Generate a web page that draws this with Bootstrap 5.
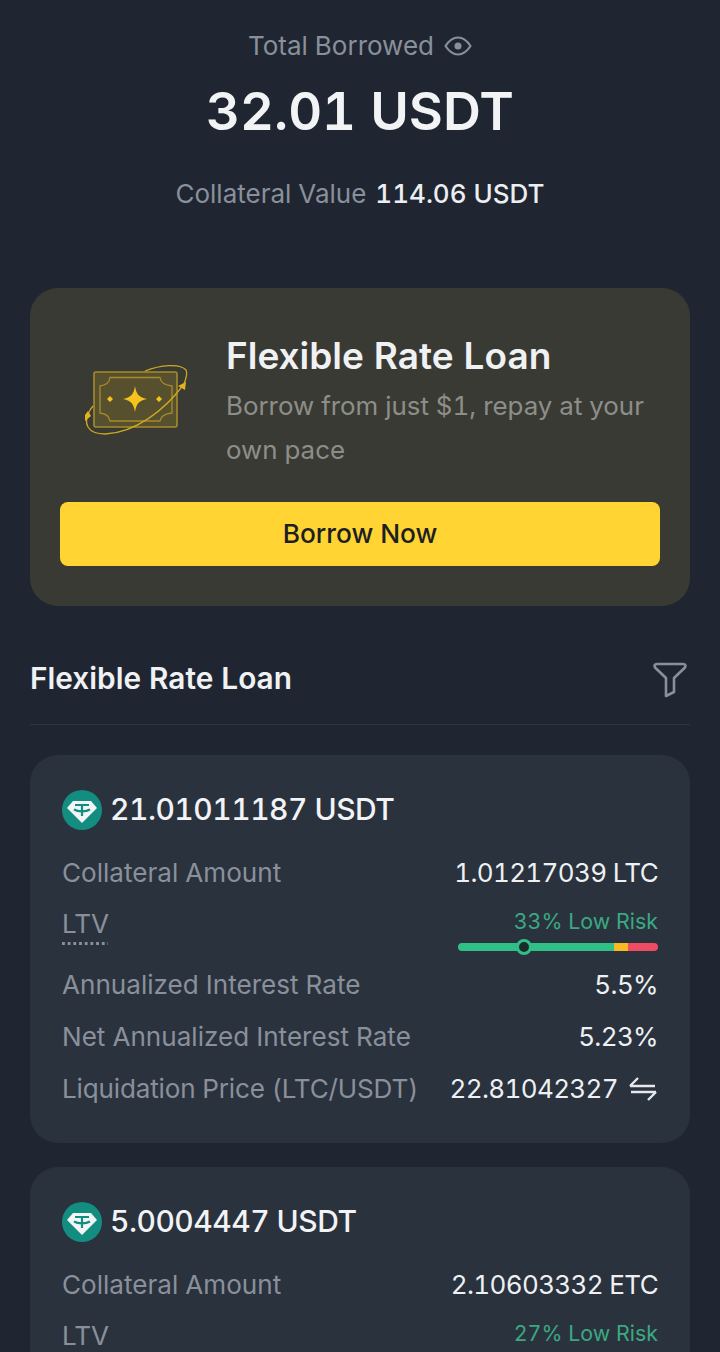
<!DOCTYPE html>
<html lang="en"><head><meta charset="utf-8"><title>Loan</title>
<link href="https://cdn.jsdelivr.net/npm/bootstrap@5.3.0/dist/css/bootstrap.min.css" rel="stylesheet">
<style>
html,body{height:1352px;overflow:hidden;background:#1f2632}
body{font-family:Inter,Lato,sans-serif;color:#f2f3f5;width:720px;font-feature-settings:"tnum"}
.muted-t{color:#8a909a}
.top-wrap{padding-top:28px;height:288px}
.tb-label{font-size:26px;line-height:36px;gap:10px}
.tb-val{font-size:52.500px;font-weight:600;line-height:64px;margin-top:15px}
.tb-coll{font-size:26px;line-height:36px;margin-top:33px}
.tb-coll b{font-weight:500;color:#eceef1;margin-left:2px}
.promo{margin:0 30px;height:318px;background:#3a3a34;border-radius:28px;padding:30px}
.promo-ic{width:166px;flex:none;padding:42px 0 0 20px}
.promo-ic svg{display:block}
.promo-title{font-size:37px;font-weight:600;line-height:44px;margin-top:16px;color:#f0f1f2}
.promo-sub{font-size:25.900px;line-height:44px;color:#8d8e89;margin-top:6px}
.borrow{height:64px;background:#ffd433;border:0;border-radius:8px;color:#1c1f24;font-size:26.300px;font-weight:500;margin-top:30px;display:flex;align-items:center;justify-content:center;width:600px}
.sec-head{margin:46px 30px 0;height:73px;border-bottom:1px solid #2e3541;padding-bottom:18px}
.sec-title{font-size:29.800px;font-weight:600;color:#f0f1f3;margin-top:-2px}
.filter-ic{margin-right:2px}
.loan{margin:30px 30px 0;background:#2a323e;border-radius:28px;padding:32px;height:388px}
.loan+.loan{margin-top:24px}
.coin{width:40px;height:40px;flex:none;margin-top:2px}
.loan-amt{font-size:30px;font-weight:500;line-height:44px;gap:8px;color:#f2f3f5;letter-spacing:-.5px}
.rowx{font-size:26px;line-height:36px;color:#eef0f2;letter-spacing:-.65px}
.rowx>span:first-child{color:#8a909a;font-size:26.100px;letter-spacing:0}
.rowx>span.liq-k:first-child{letter-spacing:-.17px}
.r1{margin-top:24px;height:52px}.r2{height:60px}.r3{height:52px}
.ltv-k{display:inline-block;background-image:linear-gradient(90deg,#8a909a 3px,transparent 3px);background-size:5.700px 3px;background-repeat:repeat-x;background-position:0 35px;height:40px;line-height:34px;width:46px}
.risk{font-size:21.400px;line-height:28px;color:#3aa981;text-align:right;letter-spacing:0}
.bar{width:200px;height:8px;border-radius:4px;background:linear-gradient(90deg,#2fbf87 0 156px,#f7b924 156px 170px,#ee4c62 170px);position:relative;margin-top:8px}
.knob{position:absolute;left:58px;top:-4px;width:16px;height:16px;border-radius:50%;background:#1b2a2a;border:3px solid #2fbf87}
.liq{height:36px;gap:11px;margin-right:1px}
.swap{display:block}
</style></head><body>
<div class="top-wrap text-center">
 <div class="tb-label muted-t d-flex justify-content-center align-items-center">
  <span>Total Borrowed</span>
  <svg width="28" height="20" viewBox="0 0 28 20" fill="none" stroke="#8a909a" stroke-width="2.200"><path d="M1.500 10C6 3 10 1.500 14 1.500S22 3 26.500 10C22 17 18 18.500 14 18.500S6 17 1.500 10Z" stroke-linejoin="round"/><circle cx="14" cy="10" r="3.500" fill="#8a909a" stroke="none"/></svg>
 </div>
 <div class="tb-val">32.01 USDT</div>
 <div class="tb-coll muted-t">Collateral Value <b>114.06 USDT</b></div>
</div>
<div class="promo">
 <div class="d-flex">
  <div class="promo-ic">
   <svg width="112" height="80" viewBox="80 360 112 80" fill="none">
    <rect x="94" y="372" width="83" height="55" rx="2" fill="#57502f" stroke="#a68b2c" stroke-width="1.600"/>
    <path d="M110 377.500H160Q161 385 172 386V413Q161 414 160 421H110Q109 414 100 413V386Q109 385 110 377.500Z" stroke="#a68b2c" stroke-width="1.300"/>
    <path d="M135 386C136.500 394 138 397 147 399C138 401 136.500 404 135 412C133.500 404 132 401 123 399C132 397 133.500 394 135 386Z" fill="#f6c31c"/>
    <path d="M110 396l3 3l-3 3l-3-3zM159 396l3 3l-3 3l-3-3z" fill="#f6c31c"/>
    <path d="M145 371C160 365 180 363 186 370C188 374 186 378 184 384M184 384C165 410 135 433 105 434C88 434 82 424 90 410L93 406" stroke="#cda722" stroke-width="1.300"/>
    <path d="M186 382L178 386L185 390ZM85 415L85 421L91 416L88 411Z" fill="#e0b31f"/>
   </svg>
  </div>
  <div>
   <div class="promo-title">Flexible Rate Loan</div>
   <div class="promo-sub">Borrow from just $1, repay at your own pace</div>
  </div>
 </div>
 <button class="borrow" type="button">Borrow Now</button>
</div>
<div class="sec-head d-flex justify-content-between align-items-center">
 <span class="sec-title">Flexible Rate Loan</span>
 <svg class="filter-ic" width="36" height="38" viewBox="0 0 36 38" fill="none" stroke="#8a909a" stroke-width="2.600" stroke-linejoin="round"><path d="M5 4H31Q34.500 4 33 7.500L22 18V32L14 36V18L3 7.500Q1.500 4 5 4Z"/></svg>
</div>
<div class="loan">
 <div class="loan-amt d-flex align-items-center">
  <svg class="coin" viewBox="0 0 40 40"><circle cx="20" cy="20" r="20" fill="#138d80"/><path d="M11 11H29L35 18L20 33L5 18Z" fill="#f2f5f5"/><path d="M13 15H27M20 15V26M12 19.500C16 22 24 22 28 19.500" stroke="#138d80" stroke-width="2.200" fill="none"/></svg>
  <span>21.01011187 USDT</span>
 </div>
 <div class="rowx r1 d-flex justify-content-between"><span>Collateral Amount</span><span>1.01217039 LTC</span></div>
 <div class="rowx r2 d-flex justify-content-between"><span class="ltv-k">LTV</span><div><div class="risk">33% Low Risk</div><div class="bar"><span class="knob"></span></div></div></div>
 <div class="rowx r3 d-flex justify-content-between"><span>Annualized Interest Rate</span><span>5.5%</span></div>
 <div class="rowx r3 d-flex justify-content-between"><span>Net Annualized Interest Rate</span><span>5.23%</span></div>
 <div class="rowx r3 d-flex justify-content-between"><span class="liq-k">Liquidation Price (LTC/USDT)</span><span class="liq d-flex align-items-center">22.81042327 <svg class="swap" width="28" height="24" viewBox="0 0 28 24" fill="none" stroke="#e6e8eb" stroke-width="2.400"><path d="M1 9H26M1 9L9 1M27 15H2M27 15L19 23"/></svg></span></div>
</div>
<div class="loan">
 <div class="loan-amt d-flex align-items-center">
  <svg class="coin" viewBox="0 0 40 40"><circle cx="20" cy="20" r="20" fill="#138d80"/><path d="M11 11H29L35 18L20 33L5 18Z" fill="#f2f5f5"/><path d="M13 15H27M20 15V26M12 19.500C16 22 24 22 28 19.500" stroke="#138d80" stroke-width="2.200" fill="none"/></svg>
  <span>5.0004447 USDT</span>
 </div>
 <div class="rowx r1 d-flex justify-content-between"><span>Collateral Amount</span><span>2.10603332 ETC</span></div>
 <div class="rowx r2 d-flex justify-content-between"><span class="ltv-k">LTV</span><div><div class="risk">27% Low Risk</div></div></div>
</div>
</body></html>
